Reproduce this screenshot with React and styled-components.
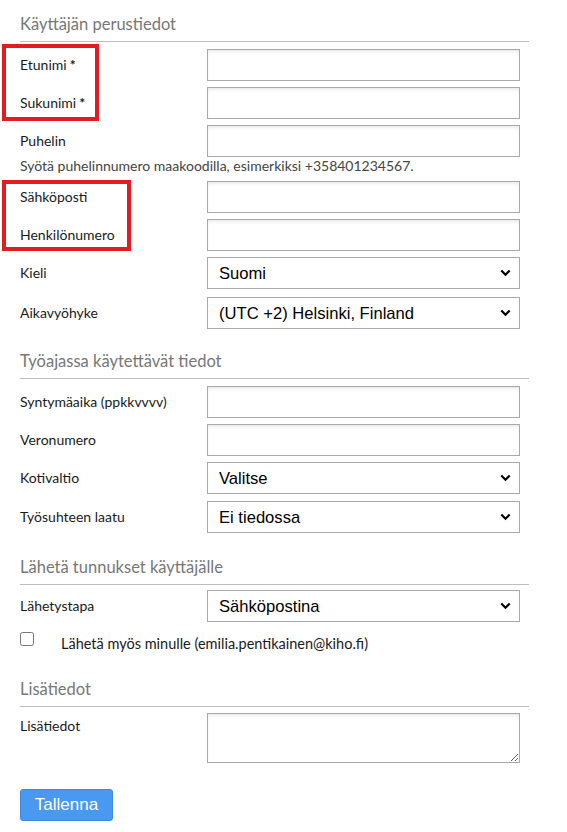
import React from "react";
import styled, { createGlobalStyle } from "styled-components";

const GlobalStyle = createGlobalStyle`
  html, body { margin: 0; padding: 0; background: #ffffff; }
  body { font-family: Lato, "Open Sans", sans-serif; color: #1a1a1a; }
  * { box-sizing: border-box; }
`;

const Page = styled.form`
  padding: 0 38px 0 20px;
  width: 567px;
`;

const Section = styled.section``;

const SectionTitle = styled.h3`
  margin: 0 0 ${(p) => p.$after ?? 7}px 0;
  padding: 14px 0 7px 0;
  font-weight: 400;
  font-size: 16.5px;
  line-height: 20px;
  color: #777;
  border-bottom: 1px solid #bdbdbd;
`;

const Group = styled.div`
  position: relative;
`;

const Highlight = styled.div`
  position: absolute;
  left: -18px;
  top: ${(p) => p.$top}px;
  bottom: ${(p) => p.$bottom}px;
  width: ${(p) => p.$width}px;
  border: 4px solid #e31b23;
  pointer-events: none;
`;

const FieldBlock = styled.div`
  margin-bottom: ${(p) => p.$gap ?? 6}px;
`;

const Row = styled.div`
  display: grid;
  grid-template-columns: 187px 313px;
  align-items: ${(p) => (p.$top ? "start" : "center")};
`;

const Label = styled.label`
  font-size: 14px;
  line-height: ${(p) => (p.$top ? "26px" : "18px")};
  color: #1a1a1a;
`;

const Req = styled.span`
  font-weight: 700;
  margin-left: 3px;
`;

const TextInput = styled.input`
  display: block;
  width: 313px;
  height: 32px;
  margin: 0;
  border: 1px solid #a9a9a9;
  border-radius: 0;
  box-shadow: inset 0 3px 4px -2px rgba(0, 0, 0, 0.12);
  background: #fff;
  padding: 4px 10px;
  font: 16px "Liberation Sans", Arial, sans-serif;
`;

const TextArea = styled.textarea`
  display: block;
  width: 313px;
  height: 50px;
  margin: 0;
  border: 1px solid #a9a9a9;
  border-radius: 0;
  box-shadow: inset 0 3px 4px -2px rgba(0, 0, 0, 0.12);
  background: #fff;
  padding: 4px 10px;
  font: 16px "Liberation Sans", Arial, sans-serif;
`;

const SelectWrap = styled.div`
  position: relative;
  width: 313px;
  height: 32px;
`;

const Select = styled.select`
  appearance: none;
  -webkit-appearance: none;
  display: block;
  width: 100%;
  height: 32px;
  margin: 0;
  border: 1px solid #a9a9a9;
  border-radius: 0;
  background: #fff;
  padding: 0 30px 0 11px;
  font: 16.6px "Liberation Sans", Arial, sans-serif;
  color: #000;
`;

const Chevron = styled.svg`
  position: absolute;
  right: 9px;
  top: 12px;
  width: 11px;
  height: 8px;
  pointer-events: none;
`;

const Help = styled.div`
  font-size: 14px;
  line-height: 18px;
  color: #444;
  white-space: nowrap;
`;

const CheckRow = styled.label`
  display: flex;
  align-items: flex-start;
  gap: 27px;
  margin: 10px 0 12px;
  font-size: 14.5px;
  line-height: 18px;
  color: #1a1a1a;
`;

const Check = styled.input`
  width: 14px;
  height: 14px;
  margin: 0;
  flex: none;
  accent-color: #777;
`;

const CheckText = styled.span`
  padding-top: 3px;
`;

const SaveButton = styled.button`
  margin-top: 26px;
  width: 93px;
  height: 32px;
  background: #4a99f0;
  border: 1px solid #3d89dc;
  border-radius: 3px;
  color: #fff;
  font: 17px "Liberation Sans", Arial, sans-serif;
  padding: 0;
  cursor: pointer;
`;

function InputField({ label, required, gap }) {
  return (
    <FieldBlock $gap={gap}>
      <Row>
        <Label>
          {label}
          {required && <Req>*</Req>}
        </Label>
        <TextInput type="text" />
      </Row>
    </FieldBlock>
  );
}

function SelectField({ label, value, gap = 8 }) {
  return (
    <FieldBlock $gap={gap}>
      <Row>
        <Label>{label}</Label>
        <SelectWrap>
          <Select defaultValue={value}>
            <option>{value}</option>
          </Select>
          <Chevron viewBox="0 0 11 8">
            <path d="M1.3 1.5 L5.5 5.7 L9.7 1.5" fill="none" stroke="#000" strokeWidth="2.2" />
          </Chevron>
        </SelectWrap>
      </Row>
    </FieldBlock>
  );
}

export default function App() {
  return (
    <>
      <GlobalStyle />
      <Page onSubmit={(e) => e.preventDefault()}>
        <Section>
          <SectionTitle>Käyttäjän perustiedot</SectionTitle>
          <Group>
            <Highlight $top={-5} $bottom={-2} $width={97} />
            <InputField label="Etunimi" required />
            <InputField label="Sukunimi" required />
          </Group>
          <FieldBlock $gap={6}>
            <Row>
              <Label>Puhelin</Label>
              <TextInput type="text" />
            </Row>
            <Help>Syötä puhelinnumero maakoodilla, esimerkiksi +358401234567.</Help>
          </FieldBlock>
          <Group>
            <Highlight $top={-1} $bottom={0} $width={129} />
            <InputField label="Sähköposti" />
            <InputField label="Henkilönumero" />
          </Group>
          <SelectField label="Kieli" value="Suomi" />
          <SelectField label="Aikavyöhyke" value="(UTC +2) Helsinki, Finland" />
        </Section>

        <Section>
          <SectionTitle>Työajassa käytettävät tiedot</SectionTitle>
          <InputField label="Syntymäaika (ppkkvvvv)" />
          <InputField label="Veronumero" />
          <SelectField label="Kotivaltio" value="Valitse" gap={7} />
          <SelectField label="Työsuhteen laatu" value="Ei tiedossa" gap={10} />
        </Section>

        <Section>
          <SectionTitle $after={5}>Lähetä tunnukset käyttäjälle</SectionTitle>
          <SelectField label="Lähetystapa" value="Sähköpostina" gap={0} />
          <CheckRow>
            <Check type="checkbox" />
            <CheckText>Lähetä myös minulle (emilia.pentikainen@kiho.fi)</CheckText>
          </CheckRow>
        </Section>

        <Section>
          <SectionTitle $after={6}>Lisätiedot</SectionTitle>
          <FieldBlock $gap={0}>
            <Row $top>
              <Label $top>Lisätiedot</Label>
              <TextArea />
            </Row>
          </FieldBlock>
        </Section>

        <SaveButton type="submit">Tallenna</SaveButton>
      </Page>
    </>
  );
}
